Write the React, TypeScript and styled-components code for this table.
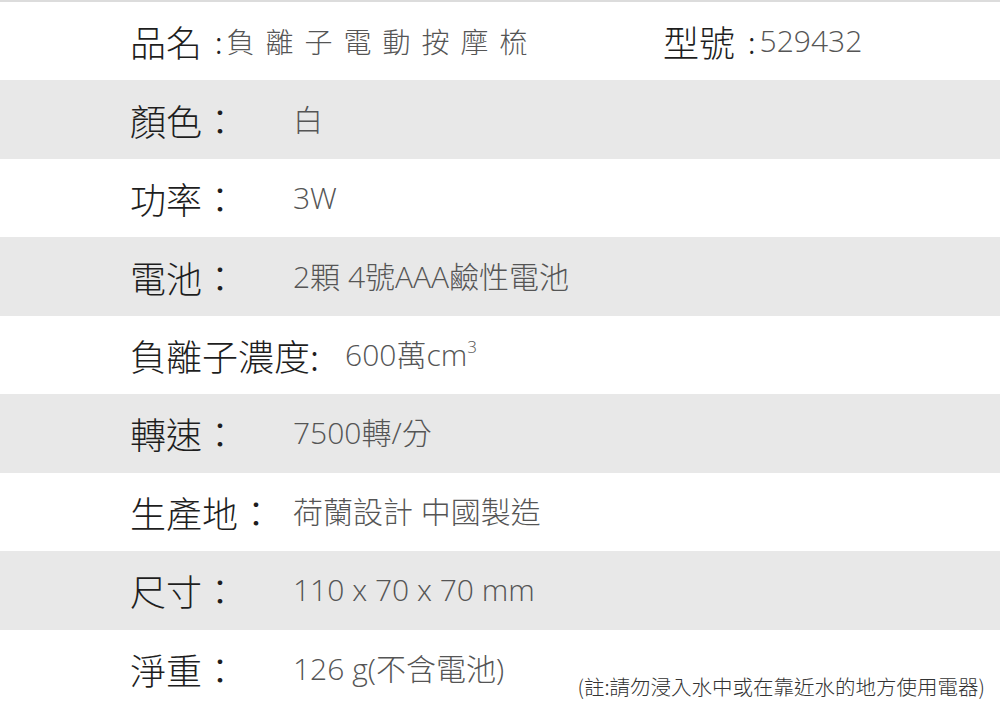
import styled, { createGlobalStyle } from "styled-components";

const GlobalStyle = createGlobalStyle`
  html, body {
    margin: 0;
    padding: 0;
    background: #fff;
  }
  body {
    font-family: "Noto Sans CJK TC", "Noto Sans", sans-serif;
  }
`;

const Sheet = styled.div`
  width: 1000px;
  height: 708px;
  display: flex;
  flex-direction: column;
  border-top: 2px solid #dcdcdc;
  box-sizing: border-box;
  overflow: hidden;
`;

const Row = styled.div<{ $shade?: boolean }>`
  flex: 1;
  display: flex;
  align-items: center;
  padding-left: 130px;
  padding-right: 15px;
  background-color: ${(props) => (props.$shade ? "#e8e8e8" : "#ffffff")};
`;

const NameGroup = styled.div`
  flex: 0 0 533px;
  display: flex;
  align-items: center;
`;

const ModelGroup = styled.div`
  display: flex;
  align-items: center;
`;

const Label = styled.span<{ $wide?: boolean }>`
  min-width: ${(props) => (props.$wide ? "auto" : "163px")};
  padding-right: ${(props) => (props.$wide ? "26px" : "0")};
  font-family: "Noto Sans CJK TC", sans-serif;
  font-size: 36px;
  font-weight: 300;
  color: #1e1e1e;
  line-height: 1;
  white-space: nowrap;
`;

const Head = styled.span`
  font-family: "Noto Sans CJK TC", sans-serif;
  font-size: 36px;
  font-weight: 300;
  color: #1e1e1e;
  line-height: 1;
`;

const Colon = styled.span`
  font-family: "Noto Sans CJK TC", sans-serif;
  font-size: 30px;
  font-weight: 300;
  color: #222;
  margin: 0 4px 0 13px;
  line-height: 1;
`;

const ProductName = styled.span`
  font-family: "Noto Sans CJK TC", sans-serif;
  font-size: 28px;
  font-weight: 300;
  letter-spacing: 11px;
  color: #555;
  line-height: 1;
`;

const Value = styled.span`
  font-family: "Open Sans", "Noto Sans CJK TC", sans-serif;
  font-size: 30px;
  font-weight: 300;
  color: #555;
  line-height: 1;
  white-space: nowrap;

  sup {
    font-size: 17px;
    vertical-align: 13px;
    line-height: 0;
  }
`;

const Note = styled.span`
  margin-left: auto;
  align-self: flex-end;
  padding-bottom: 7px;
  font-family: "Noto Sans CJK TC", sans-serif;
  font-size: 20.5px;
  font-weight: 300;
  color: #333;
  white-space: nowrap;
`;

const specs = [
  { label: "顏色：", value: "白" },
  { label: "功率：", value: "3W" },
  { label: "電池：", value: "2顆 4號AAA鹼性電池" },
  { label: "負離子濃度:", value: "600萬cm", sup: "3", wide: true },
  { label: "轉速：", value: "7500轉/分" },
  { label: "生產地：", value: "荷蘭設計 中國製造" },
  { label: "尺寸：", value: "110 x 70 x 70 mm" },
];

export default function App() {
  return (
    <>
      <GlobalStyle />
      <Sheet>
        <Row>
          <NameGroup>
            <Head>品名</Head>
            <Colon>:</Colon>
            <ProductName>負離子電動按摩梳</ProductName>
          </NameGroup>
          <ModelGroup>
            <Head>型號</Head>
            <Colon>:</Colon>
            <Value>529432</Value>
          </ModelGroup>
        </Row>
        {specs.map((s, i) => (
          <Row key={s.label} $shade={i % 2 === 0}>
            <Label $wide={s.wide}>{s.label}</Label>
            <Value>
              {s.value}
              {s.sup && <sup>{s.sup}</sup>}
            </Value>
          </Row>
        ))}
        <Row>
          <Label>淨重：</Label>
          <Value>126 g(不含電池)</Value>
          <Note>(註:請勿浸入水中或在靠近水的地方使用電器)</Note>
        </Row>
      </Sheet>
    </>
  );
}
